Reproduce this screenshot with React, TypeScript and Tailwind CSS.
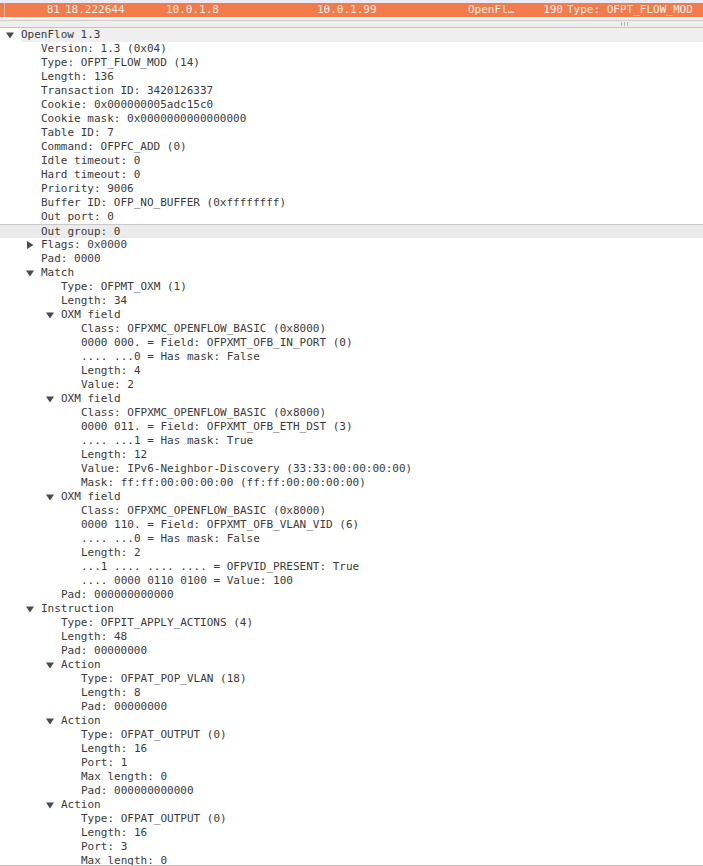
import React from "react";

type Row = { lvl: number; text: string; arrow?: "down" | "right"; hl?: "top" | "sel" };

const rows: Row[] = [
  { lvl: 0, text: "OpenFlow 1.3", arrow: "down", hl: "top" },
  { lvl: 1, text: "Version: 1.3 (0x04)" },
  { lvl: 1, text: "Type: OFPT_FLOW_MOD (14)" },
  { lvl: 1, text: "Length: 136" },
  { lvl: 1, text: "Transaction ID: 3420126337" },
  { lvl: 1, text: "Cookie: 0x000000005adc15c0" },
  { lvl: 1, text: "Cookie mask: 0x0000000000000000" },
  { lvl: 1, text: "Table ID: 7" },
  { lvl: 1, text: "Command: OFPFC_ADD (0)" },
  { lvl: 1, text: "Idle timeout: 0" },
  { lvl: 1, text: "Hard timeout: 0" },
  { lvl: 1, text: "Priority: 9006" },
  { lvl: 1, text: "Buffer ID: OFP_NO_BUFFER (0xffffffff)" },
  { lvl: 1, text: "Out port: 0" },
  { lvl: 1, text: "Out group: 0", hl: "sel" },
  { lvl: 1, text: "Flags: 0x0000", arrow: "right" },
  { lvl: 1, text: "Pad: 0000" },
  { lvl: 1, text: "Match", arrow: "down" },
  { lvl: 2, text: "Type: OFPMT_OXM (1)" },
  { lvl: 2, text: "Length: 34" },
  { lvl: 2, text: "OXM field", arrow: "down" },
  { lvl: 3, text: "Class: OFPXMC_OPENFLOW_BASIC (0x8000)" },
  { lvl: 3, text: "0000 000. = Field: OFPXMT_OFB_IN_PORT (0)" },
  { lvl: 3, text: ".... ...0 = Has mask: False" },
  { lvl: 3, text: "Length: 4" },
  { lvl: 3, text: "Value: 2" },
  { lvl: 2, text: "OXM field", arrow: "down" },
  { lvl: 3, text: "Class: OFPXMC_OPENFLOW_BASIC (0x8000)" },
  { lvl: 3, text: "0000 011. = Field: OFPXMT_OFB_ETH_DST (3)" },
  { lvl: 3, text: ".... ...1 = Has mask: True" },
  { lvl: 3, text: "Length: 12" },
  { lvl: 3, text: "Value: IPv6-Neighbor-Discovery (33:33:00:00:00:00)" },
  { lvl: 3, text: "Mask: ff:ff:00:00:00:00 (ff:ff:00:00:00:00)" },
  { lvl: 2, text: "OXM field", arrow: "down" },
  { lvl: 3, text: "Class: OFPXMC_OPENFLOW_BASIC (0x8000)" },
  { lvl: 3, text: "0000 110. = Field: OFPXMT_OFB_VLAN_VID (6)" },
  { lvl: 3, text: ".... ...0 = Has mask: False" },
  { lvl: 3, text: "Length: 2" },
  { lvl: 3, text: "...1 .... .... .... = OFPVID_PRESENT: True" },
  { lvl: 3, text: ".... 0000 0110 0100 = Value: 100" },
  { lvl: 2, text: "Pad: 000000000000" },
  { lvl: 1, text: "Instruction", arrow: "down" },
  { lvl: 2, text: "Type: OFPIT_APPLY_ACTIONS (4)" },
  { lvl: 2, text: "Length: 48" },
  { lvl: 2, text: "Pad: 00000000" },
  { lvl: 2, text: "Action", arrow: "down" },
  { lvl: 3, text: "Type: OFPAT_POP_VLAN (18)" },
  { lvl: 3, text: "Length: 8" },
  { lvl: 3, text: "Pad: 00000000" },
  { lvl: 2, text: "Action", arrow: "down" },
  { lvl: 3, text: "Type: OFPAT_OUTPUT (0)" },
  { lvl: 3, text: "Length: 16" },
  { lvl: 3, text: "Port: 1" },
  { lvl: 3, text: "Max length: 0" },
  { lvl: 3, text: "Pad: 000000000000" },
  { lvl: 2, text: "Action", arrow: "down" },
  { lvl: 3, text: "Type: OFPAT_OUTPUT (0)" },
  { lvl: 3, text: "Length: 16" },
  { lvl: 3, text: "Port: 3" },
  { lvl: 3, text: "Max length: 0" },
];

const pad = ["pl-[6px]", "pl-[26px]", "pl-[46px]", "pl-[66px]"];

function Arrow({ dir }: { dir?: "down" | "right" }) {
  if (!dir) return <span className="w-[15px] shrink-0" />;
  return (
    <span className="w-[15px] shrink-0 flex items-center">
      <svg width="8" height="8" viewBox="0 0 8 8">
        {dir === "down" ? (
          <path d="M0 1.5 L8 1.5 L4 7.5 Z" fill="#4a4a4a" />
        ) : (
          <path d="M1 0 L7.5 4 L1 8 Z" fill="#4a4a4a" />
        )}
      </svg>
    </span>
  );
}

function TreeRow({ r }: { r: Row }) {
  const sel = r.hl === "sel" ? "bg-[#ebebeb] border-t border-[#c9c9c9]" : "";
  return (
    <div className={`h-[14px] flex items-center ${pad[r.lvl]} ${sel}`}>
      <Arrow dir={r.arrow} />
      <span
        className={`whitespace-pre leading-[14px] ${
          r.hl === "top" ? "bg-[#efefef] flex-1" : ""
        }`}
      >
        {r.text}
      </span>
    </div>
  );
}

export default function App() {
  return (
    <div className="w-[703px] h-[866px] bg-white flex flex-col overflow-hidden font-['DejaVu_Sans_Mono',monospace] text-[11px] text-[#3b3b3b]">
      <div className="h-[3px] bg-[#eceaf3]" />
      <div className="h-[14px] bg-[#f17b4b] text-[#fdf1ea] flex items-center leading-[14px] whitespace-pre">
        <span className="w-[5px] h-full border-r border-[#f7b7a0] shrink-0" />
        <span className="w-[55px] text-right">81</span>
        <span className="w-[106px] pl-[5px]">18.222644</span>
        <span className="w-[151px]">10.0.1.8</span>
        <span className="w-[151px]">10.0.1.99</span>
        <span className="w-[48px]">OpenFl…</span>
        <span className="w-[47px] text-right">190</span>
        <span className="pl-[4px]">Type: OFPT_FLOW_MOD</span>
      </div>
      <div className="h-[3px] bg-[#f4f3f8]" />
      <div className="h-px bg-[#cfcdc8]" />
      <div className="h-[6px] bg-[#efeeec] flex items-center pl-[621px] gap-[2px]">
        <span className="w-px h-[4px] bg-[#b5b3ae]" />
        <span className="w-px h-[4px] bg-[#b5b3ae]" />
        <span className="w-px h-[4px] bg-[#b5b3ae]" />
      </div>
      <div className="h-px bg-[#c5c3bd]" />
      <div className="flex-1 overflow-hidden">
        {rows.map((r, i) => (
          <TreeRow key={i} r={r} />
        ))}
      </div>
      <div className="h-px bg-[#c6c3bb]" />
    </div>
  );
}
